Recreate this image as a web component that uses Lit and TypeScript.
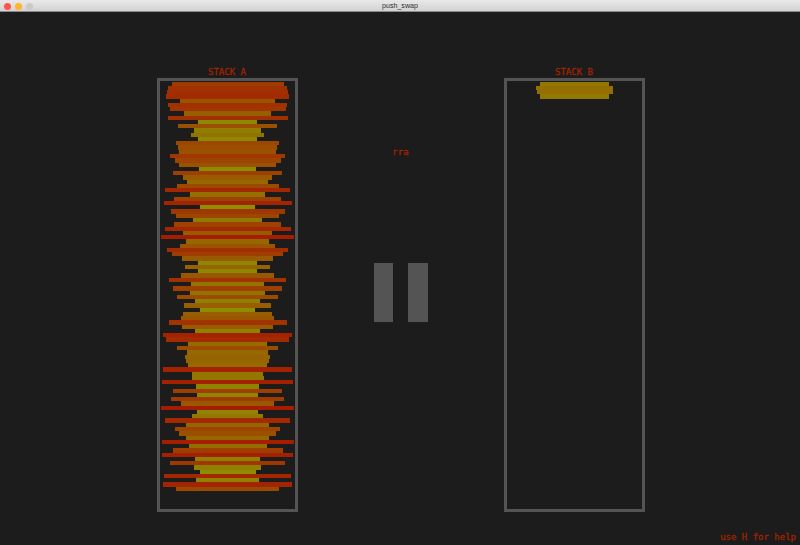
import { LitElement, html, css } from "lit";
import { customElement, property } from "lit/decorators.js";

// Bar widths, top to bottom, in thirds of a pixel.
const STACK_A = [
  336, 358, 364, 369, 285, 356, 348, 261, 360, 175, 295, 199, 220, 175, 311, 298,
  291, 345, 318, 289, 171, 327, 269, 244, 306, 377, 226, 322, 384, 164, 342, 311,
  205, 321, 378, 268, 401, 248, 283, 363, 335, 274, 179, 255, 178, 278, 351, 218,
  325, 223, 303, 193, 261, 167, 265, 281, 354, 273, 195, 389, 369, 237, 302, 241,
  256, 251, 237, 389, 214, 216, 391, 187, 329, 182, 339, 277, 401, 184, 211, 373,
  251, 315, 293, 247, 396, 234, 330, 393, 196, 343, 199, 168, 379, 189, 385, 308,
];
const STACK_B = [209, 230, 228, 207];

const MIN = 164;
const MAX = 401;

function barColor(w: number): string {
  const t = (w - MIN) / (MAX - MIN);
  const r = Math.round(142 + 23 * t);
  const g = Math.round(142 - 114 * t);
  return `rgb(${r}, ${g}, 0)`;
}

@customElement("stack-view")
export class StackView extends LitElement {
  @property() label = "";
  @property({ attribute: false }) bars: number[] = [];

  static styles = css`
    :host {
      display: block;
    }
    .label {
      height: 13px;
      line-height: 14px;
      padding-right: 1px;
      text-align: center;
      white-space: pre;
    }
    .frame {
      box-sizing: border-box;
      height: 434px;
      border: 3px solid #545454;
      padding-top: 0.5px;
      display: flex;
      flex-direction: column;
      align-items: center;
    }
    .bar {
      flex: none;
      height: 4.272px;
    }
  `;

  render() {
    return html`
      <div class="label">${this.label}</div>
      <div class="frame">
        ${this.bars.map(
          (w) => html`<div class="bar" style="width:${(w / 3).toFixed(2)}px;background:${barColor(w)}"></div>`
        )}
      </div>
    `;
  }
}

@customElement("app-root")
export class AppRoot extends LitElement {
  static styles = css`
    :host {
      display: flex;
      flex-direction: column;
      width: 800px;
      height: 545px;
      overflow: hidden;
      background: #1c1c1c;
      color: #a02300;
      font: 9px "DejaVu Sans Mono", monospace;
      -webkit-text-stroke: 0.3px currentColor;
    }
    .titlebar {
      flex: none;
      box-sizing: border-box;
      height: 12px;
      display: grid;
      grid-template-columns: 1fr auto 1fr;
      align-items: center;
      background: linear-gradient(#e9e9e9, #d2d2d2);
      border-bottom: 1px solid #8a8a8a;
      color: #2c2c2c;
      font: 7.1px/12px "Liberation Sans", Arial, sans-serif;
      -webkit-text-stroke: 0;
    }
    .lights {
      display: flex;
      gap: 4px;
      padding-left: 4px;
    }
    .light {
      width: 7px;
      height: 7px;
      border-radius: 50%;
    }
    .close {
      background: #fc544d;
    }
    .minimise {
      background: #fdb628;
    }
    .zoom {
      background: #c9c9c9;
    }
    .board {
      flex: none;
      height: 447px;
      display: grid;
      grid-template-columns: 141px 206px 141px;
      padding: 53px 0 0 157px;
    }
    .centre {
      display: flex;
      flex-direction: column;
      align-items: center;
    }
    .operation {
      height: 12px;
      line-height: 12px;
      margin-top: 81px;
      padding-right: 1px;
    }
    .pause {
      display: flex;
      gap: 15px;
      margin-top: 105px;
      padding-right: 1px;
    }
    .pause-bar {
      width: 19.5px;
      height: 59px;
      background: #545454;
    }
    .hint {
      margin-top: auto;
      padding: 0 4px 2px 0;
      line-height: 12px;
      text-align: right;
    }
  `;

  render() {
    return html`
      <div class="titlebar">
        <div class="lights">
          <span class="light close"></span>
          <span class="light minimise"></span>
          <span class="light zoom"></span>
        </div>
        <span>push_swap</span>
        <span></span>
      </div>
      <div class="board">
        <stack-view label="STACK A" .bars=${STACK_A}></stack-view>
        <div class="centre">
          <div class="operation">rra</div>
          <div class="pause">
            <div class="pause-bar"></div>
            <div class="pause-bar"></div>
          </div>
        </div>
        <stack-view label="STACK B" .bars=${STACK_B}></stack-view>
      </div>
      <div class="hint">use H for help</div>
    `;
  }
}
